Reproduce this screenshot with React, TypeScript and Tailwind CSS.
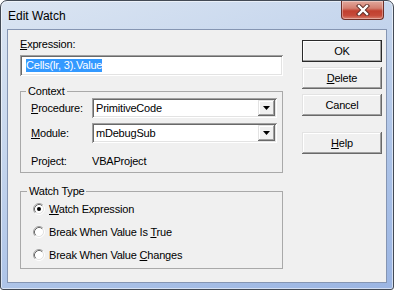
const sunken =
  "shadow-[inset_1px_1px_0_#a0a0a0,inset_-1px_-1px_0_#ffffff,inset_2px_2px_0_#696969,inset_-2px_-2px_0_#e3e3e3]";
const raised =
  "shadow-[inset_-1px_-1px_0_#696969,inset_1px_1px_0_#e3e3e3,inset_-2px_-2px_0_#a0a0a0,inset_2px_2px_0_#ffffff]";

function Radio({ checked }: { checked?: boolean }) {
  return (
    <svg width="12" height="12" viewBox="0 0 12 12" className="shrink-0">
      <circle cx="6" cy="6" r="4.5" fill="#fff" />
      <path d="M2.11 9.89A5.5 5.5 0 0 1 9.89 2.11" fill="none" stroke="#a0a0a0" />
      <path d="M9.89 2.11A5.5 5.5 0 0 1 2.11 9.89" fill="none" stroke="#ffffff" />
      <path d="M2.82 9.18A4.5 4.5 0 0 1 9.18 2.82" fill="none" stroke="#696969" />
      <path d="M9.18 2.82A4.5 4.5 0 0 1 2.82 9.18" fill="none" stroke="#e3e3e3" />
      {checked && <circle cx="6" cy="6" r="2" fill="#000" />}
    </svg>
  );
}

function Combo({ value }: { value: string }) {
  return (
    <div className={`flex h-[20px] w-[185px] bg-white p-[2px] ${sunken}`}>
      <div className="flex flex-1 items-center pl-[2px] leading-[13px]">{value}</div>
      <div className={`flex w-[17px] items-center justify-center bg-[#f0f0f0] ${raised}`}>
        <svg width="7" height="4" viewBox="0 0 7 4">
          <path d="M0 0h7L3.5 4z" fill="#000" />
        </svg>
      </div>
    </div>
  );
}

function Btn({ children, primary }: { children: React.ReactNode; primary?: boolean }) {
  return (
    <button
      type="button"
      className={`flex h-[22px] w-[80px] items-center justify-center bg-[#f0f0f0] leading-[13px] text-black ${raised} ${
        primary ? "outline outline-1 -outline-offset-1 outline-[#2a2a2a]" : ""
      }`}
    >
      {children}
    </button>
  );
}

export default function App() {
  return (
    <div className="font-['Liberation_Sans',Arial,sans-serif] text-[11px] tracking-[-0.2px] text-black">
      <div className="flex h-[290px] w-[394px] flex-col rounded-t-[7px] rounded-b-[3px] border border-[#434a55] bg-[linear-gradient(160deg,#dbe5f2_0%,#c6d6ed_35%,#abc2e7_70%,#9bb5e3_100%)] px-[6px] pb-[6px] shadow-[inset_0_0_0_1px_rgba(255,255,255,0.55)]">
        {/* Title bar */}
        <div className="flex h-[28px] items-start justify-between">
          <div className="ml-[1px] mt-[8px] text-[12px] leading-[15px] tracking-normal">Edit Watch</div>
          <div className="mr-[3px] flex h-[19px] w-[43px] items-center justify-center rounded-b-[4px] border border-t-0 border-[#6e2f27] bg-[linear-gradient(180deg,#e2a89c_0%,#d47f70_40%,#c1402f_55%,#c64a39_80%,#d9806f_100%)] shadow-[inset_0_0_0_1px_rgba(255,255,255,0.35)]">
            <svg width="14" height="12" viewBox="0 0 14 12">
              <path d="M3 2l8 8M11 2l-8 8" stroke="#5b2a24" strokeWidth="4.2" strokeLinecap="square" />
              <path d="M3 2l8 8M11 2l-8 8" stroke="#ffffff" strokeWidth="2.4" strokeLinecap="square" />
            </svg>
          </div>
        </div>

        {/* Client area */}
        <div className="flex flex-1 gap-[19px] border border-[#8595b2] bg-[#f0f0f0] pl-[12px] pt-[8px]">
          <div className="flex w-[263px] flex-col">
            <div className="h-[13px] leading-[13px]">
              <span className="underline">E</span>xpression:
            </div>
            <div className={`mt-[4px] flex h-[21px] items-center bg-white pl-[6px] ${sunken}`}>
              <span className="bg-[#3399ff] leading-[13px] text-white">Cells(lr, 3).Value</span>
            </div>

            <fieldset className="mt-[9px] border border-[#a9a9a9]">
              <legend className="ml-[5px] px-[2px] leading-[13px]">Context</legend>
              <div className="flex flex-col pb-[4px] pl-[10px] pr-[5px]">
                <div className="flex items-center">
                  <div className="w-[61px]">
                    <span className="underline">P</span>rocedure:
                  </div>
                  <Combo value="PrimitiveCode" />
                </div>
                <div className="mt-[5px] flex items-center">
                  <div className="w-[61px]">
                    <span className="underline">M</span>odule:
                  </div>
                  <Combo value="mDebugSub" />
                </div>
                <div className="mt-[12px] flex h-[13px] items-center leading-[13px]">
                  <div className="w-[61px]">Project:</div>
                  <div>VBAProject</div>
                </div>
              </div>
            </fieldset>

            <fieldset className="mt-[12px] border border-[#a9a9a9]">
              <legend className="ml-[6px] px-[2px] leading-[13px]">Watch Type</legend>
              <div className="flex flex-col gap-[5px] pb-[4px] pl-[12px] pt-[2px]">
                <div className="flex h-[18px] items-center gap-[4px]">
                  <Radio checked />
                  <span>
                    <span className="underline">W</span>atch Expression
                  </span>
                </div>
                <div className="flex h-[18px] items-center gap-[4px]">
                  <Radio />
                  <span>
                    Break When Value Is <span className="underline">T</span>rue
                  </span>
                </div>
                <div className="flex h-[18px] items-center gap-[4px]">
                  <Radio />
                  <span>
                    Break When Value <span className="underline">C</span>hanges
                  </span>
                </div>
              </div>
            </fieldset>
          </div>

          <div className="flex w-[80px] flex-col gap-[5px] pt-[2px]">
            <Btn primary>OK</Btn>
            <Btn>
              <span className="underline">D</span>elete
            </Btn>
            <Btn>Cancel</Btn>
            <div className="mt-[11px]">
              <Btn>
                <span className="underline">H</span>elp
              </Btn>
            </div>
          </div>
        </div>
      </div>
    </div>
  );
}
